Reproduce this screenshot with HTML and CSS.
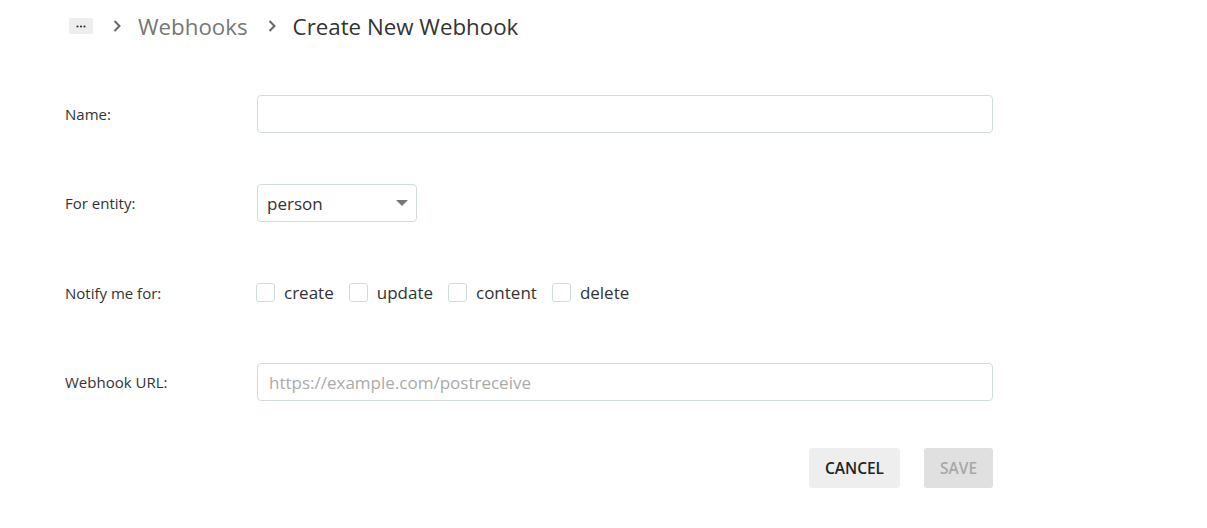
FILE: index.html
```html
<!DOCTYPE html>
<html>
<head>
<meta charset="utf-8">
<link rel="stylesheet" href="styles.css">
</head>
<body>
<div class="page">
  <nav class="crumbs">
    <span class="more"><svg width="10" height="3" viewBox="0 0 10 3"><circle cx="1.5" cy="1.5" r="1.1" fill="#333"/><circle cx="5" cy="1.5" r="1.1" fill="#333"/><circle cx="8.5" cy="1.5" r="1.1" fill="#333"/></svg></span>
    <svg class="chev" width="10" height="14" viewBox="0 0 10 14"><path d="M2.5 2 L7.5 7 L2.5 12" fill="none" stroke="#666" stroke-width="2"/></svg>
    <span class="crumb-link">Webhooks</span>
    <svg class="chev" width="10" height="14" viewBox="0 0 10 14"><path d="M2.5 2 L7.5 7 L2.5 12" fill="none" stroke="#666" stroke-width="2"/></svg>
    <span class="crumb-current">Create New Webhook</span>
  </nav>
  <form class="form">
    <div class="row">
      <label class="label">Name:</label>
      <input class="input" type="text">
    </div>
    <div class="row">
      <label class="label">For entity:</label>
      <div class="select">
        <span>person</span>
        <svg width="12" height="6" viewBox="0 0 12 6"><path d="M0 0 H12 L6 6 Z" fill="#777"/></svg>
      </div>
    </div>
    <div class="row row-checks">
      <label class="label">Notify me for:</label>
      <div class="checks">
        <span class="check"><span class="box"></span>create</span>
        <span class="check"><span class="box"></span>update</span>
        <span class="check"><span class="box"></span>content</span>
        <span class="check"><span class="box"></span>delete</span>
      </div>
    </div>
    <div class="row">
      <label class="label">Webhook URL:</label>
      <input class="input" type="text" placeholder="https://example.com/postreceive">
    </div>
    <div class="actions">
      <button type="button" class="btn cancel">CANCEL</button>
      <button type="button" class="btn save">SAVE</button>
    </div>
  </form>
</div>
</body>
</html>
```
FILE: styles.css
```css
* { box-sizing: border-box; }
body {
  margin: 0;
  font-family: "Open Sans", "Noto Sans", sans-serif;
  color: #333;
  background: #fff;
}
.page {
  padding: 0 0 0 65px;
  width: 993px;
}
.crumbs {
  display: flex;
  align-items: center;
  height: 52px;
  padding-left: 4px;
}
.more {
  display: inline-flex;
  align-items: center;
  justify-content: center;
  width: 24px;
  height: 16px;
  background: #eee;
  border-radius: 2px;
}
.chev { margin: 0 16px 0 19px; }
.crumb-link { font-size: 22.3px; font-weight: 500; color: #777; }
.crumb-current { font-size: 22.3px; font-weight: 500; color: #333; }
.form {
  display: flex;
  flex-direction: column;
  gap: 51px;
  margin-top: 43px;
}
.row {
  display: flex;
  align-items: center;
  height: 38px;
}
.row-checks { height: 39px; }
.label {
  width: 192px;
  flex: none;
  font-size: 15px;
  color: #333;
}
.input {
  width: 736px;
  height: 38px;
  border: 1px solid #d2dcdc;
  border-radius: 4px;
  padding: 0 11px;
  font-family: inherit;
  font-size: 17px;
  color: #333;
  outline: none;
}
.input::placeholder { color: #aaa; }
.select {
  width: 160px;
  height: 38px;
  border: 1px solid #d2dcdc;
  border-radius: 4px;
  display: flex;
  align-items: center;
  justify-content: space-between;
  padding: 0 8px 0 9px;
  font-size: 17px;
}
.checks { display: flex; align-items: center; gap: 15px; margin-left: -1px; }
.check {
  display: flex;
  align-items: center;
  font-size: 17px;
  color: #333;
}
.box {
  width: 19px;
  height: 19px;
  border: 1px solid #cfdcdc;
  border-radius: 3px;
  margin-right: 9px;
}
.actions {
  display: flex;
  justify-content: flex-end;
  gap: 24px;
  margin-top: -4px;
}
.btn {
  height: 40px;
  border: none;
  border-radius: 3px;
  font-family: inherit;
  font-size: 15.5px;
  font-weight: 600;
  padding: 0;
}
.cancel { background: #eee; color: #222; width: 91px; }
.save { background: #e0e0e0; color: #a8a8a8; width: 69px; }
```
